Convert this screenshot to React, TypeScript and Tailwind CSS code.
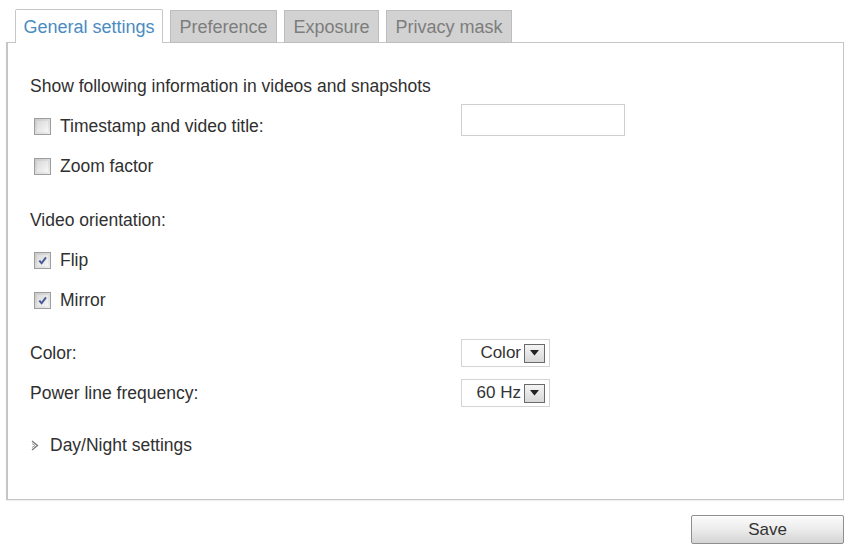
import React from "react";

const tabs = [
  { label: "General settings", w: "w-[148px]", active: true },
  { label: "Preference", w: "w-[107px]", active: false },
  { label: "Exposure", w: "w-[95px]", active: false },
  { label: "Privacy mask", w: "w-[126px]", active: false },
];

function CheckBox({ checked }: { checked?: boolean }) {
  return (
    <span className="flex h-[17px] w-[17px] shrink-0 items-center justify-center border border-[#9d9d9d] bg-gradient-to-br from-[#c9c9c9] to-[#efefef] p-[2px]">
      <span className="flex h-full w-full items-center justify-center bg-gradient-to-br from-[#dadada] to-[#f6f6f6]">
        {checked && (
          <svg width="11" height="11" viewBox="0 0 12 12">
            <path d="M2.5 6.2 L5 9 L9.8 2.5" fill="none" stroke="#4b5b98" strokeWidth="2.2" />
          </svg>
        )}
      </span>
    </span>
  );
}

function Select({ value }: { value: string }) {
  return (
    <div className="flex h-[28px] w-[89px] items-center justify-end gap-[3px] border border-[#d4d4d4] bg-white pr-[4px]">
      <span className="text-[17px] text-[#333]">{value}</span>
      <span className="flex h-[19px] w-[21px] items-center justify-center border border-[#6a6a6a] bg-gradient-to-b from-[#f4f4f4] to-[#d8d8d8]">
        <svg width="9" height="6" viewBox="0 0 9 6">
          <path d="M0 0 H9 L4.5 5.5 Z" fill="#222" />
        </svg>
      </span>
    </div>
  );
}

export default function App() {
  return (
    <div className="min-h-[545px] w-[846px] bg-white pl-[6px] pt-[9px] font-['Liberation_Sans',Arial,sans-serif] text-[#303030]">
      <div className="relative z-10 -mb-px ml-[9px] flex gap-[7px]">
        {tabs.map((t) => (
          <div
            key={t.label}
            className={
              t.active
                ? `${t.w} flex h-[34px] items-center justify-center rounded-t-[2px] border border-b-0 border-[#c6c6c6] bg-white pt-[2px] text-[18px] text-[#4a8cbf]`
                : `${t.w} mt-px flex h-[33px] items-center justify-center border border-[#bdbdbd] bg-[#d2d2d2] pt-px text-[18px] text-[#7d7d7d]`
            }
          >
            {t.label}
          </div>
        ))}
      </div>

      <div className="w-[838px] border border-l-2 border-[#c6c6c6] pb-[34px] pl-[22px] pt-[23px] shadow-[0_1px_1px_rgba(0,0,0,0.06)]">
        <div className="flex h-[40px] items-center text-[17.5px]">
          Show following information in videos and snapshots
        </div>

        <div className="grid grid-cols-[431px_1fr] text-[17.5px]">
          <div className="flex h-[40px] items-center gap-[9px] pl-[4px]">
            <CheckBox />
            <span>Timestamp and video title:</span>
          </div>
          <div className="flex h-[40px] items-start">
            <div className="-mt-[2px] h-[32px] w-[164px] border border-[#cfcfcf] bg-white" />
          </div>

          <div className="col-span-2 flex h-[40px] items-center gap-[9px] pl-[4px]">
            <CheckBox />
            <span>Zoom factor</span>
          </div>

          <div className="col-span-2 mt-[14px] flex h-[40px] items-center">Video orientation:</div>

          <div className="col-span-2 flex h-[40px] items-center gap-[9px] pl-[4px]">
            <CheckBox checked />
            <span>Flip</span>
          </div>
          <div className="col-span-2 flex h-[40px] items-center gap-[9px] pl-[4px]">
            <CheckBox checked />
            <span>Mirror</span>
          </div>

          <div className="mt-[13px] flex h-[40px] items-center">Color:</div>
          <div className="mt-[13px] flex h-[40px] items-center">
            <Select value="Color" />
          </div>

          <div className="flex h-[40px] items-center">Power line frequency:</div>
          <div className="flex h-[40px] items-center">
            <Select value="60 Hz" />
          </div>

          <div className="col-span-2 mt-[12px] flex h-[40px] items-center gap-[11px] pl-[1px]">
            <svg width="8" height="11" viewBox="0 0 8 11">
              <path d="M1 1 L6.5 5.5 L1 10" fill="none" stroke="#777" strokeWidth="1.3" />
              <path d="M1 3.5 L4 5.5 L1 7.5" fill="none" stroke="#999" strokeWidth="1" />
            </svg>
            <span>Day/Night settings</span>
          </div>
        </div>
      </div>

      <div className="flex w-[838px] justify-end pt-[15px]">
        <button
          type="button"
          className="h-[29px] w-[153px] rounded-[2px] border border-[#8f8f8f] bg-gradient-to-b from-[#fbfbfb] via-[#ececec] to-[#d4d4d4] text-[17px] text-[#333] shadow-[inset_0_1px_0_#fff]"
        >
          Save
        </button>
      </div>
    </div>
  );
}
